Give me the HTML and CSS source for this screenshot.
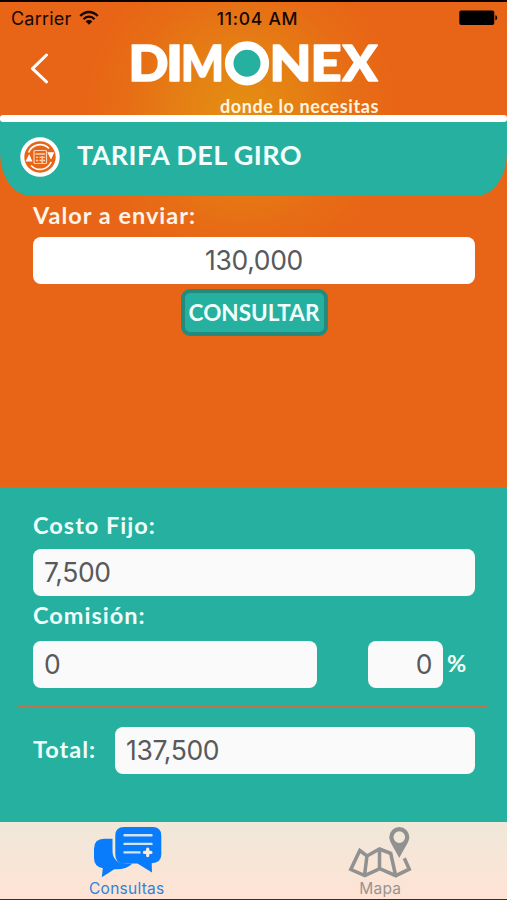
FILE: index.html
```html
<!DOCTYPE html>
<html lang="es">
<head>
<meta charset="utf-8">
<title>Dimonex</title>
<link rel="stylesheet" href="styles.css">
</head>
<body>
<div class="app">
  <div class="status">
    <span class="carrier">Carrier
      <svg width="20" height="16" viewBox="0 0 20 16" fill="none" stroke="#160600" stroke-width="2.3"><path d="M1.3 6.1C6 .6 14 .6 18.7 6.1M4.5 9.2c3-3.5 8-3.5 11 0"/><path d="M6.7 11.4c1.8-1.9 4.8-1.9 6.6 0L10 14.8z" fill="#160600" stroke="none"/></svg>
    </span>
    <span class="clock">11:04 AM</span>
    <svg class="battery" width="39" height="16" viewBox="0 0 39 16"><rect x=".3" y=".5" width="35" height="14.5" rx="2"/><path d="M36.4 5.3c2.4.5 2.4 4.5 0 5z"/></svg>
  </div>
  <header class="header">
    <svg class="back" width="20" height="32" viewBox="0 0 20 32" fill="none" stroke="#fff" stroke-width="3" stroke-linecap="round" stroke-linejoin="round"><path d="M17.500 2 3.500 15.600 17.500 28.800"/></svg>
    <div class="brand">
      <svg width="254" height="64" viewBox="127 30 254 64">
        <g class="wordmark">
          <text x="128.500" y="80.500" textLength="40" lengthAdjust="spacingAndGlyphs">D</text>
          <text x="166" y="80.500" textLength="17" lengthAdjust="spacingAndGlyphs">I</text>
          <text x="181" y="80.500" textLength="43" lengthAdjust="spacingAndGlyphs">M</text>
          <text x="229" y="80.500" textLength="37" lengthAdjust="spacingAndGlyphs">O</text>
          <text x="269.500" y="80.500" textLength="42" lengthAdjust="spacingAndGlyphs">N</text>
          <text x="310.500" y="80.500" textLength="31" lengthAdjust="spacingAndGlyphs">E</text>
          <text x="342.500" y="80.500" textLength="35" lengthAdjust="spacingAndGlyphs">X</text>
        </g>
        <circle cx="247" cy="63.300" r="17.800" fill="#26b09f" stroke="#fff" stroke-width="8.600"/>
      </svg>
      <div class="slogan">donde lo necesitas</div>
    </div>
  </header>
  <div class="rule"></div>
  <div class="title">
    <svg width="40" height="40" viewBox="0 0 40 40" fill="none" stroke="#fff">
      <circle cx="20" cy="20" r="17.700" fill="#e86417" stroke-width="4"/>
      <path d="M8.600 15.500A12.300 12.300 0 0 1 29 11.500M31.200 25A12.300 12.300 0 0 1 11 28.500" stroke-width="1.600"/>
      <path d="M5.500 24.500 9.200 17l3.200 7.500zM27.300 15.200h7L31 22.600z" fill="#fff" stroke="none"/>
      <rect x="14" y="13.500" width="12.500" height="13" rx="1" stroke="#fbd5b8" stroke-width="1.200"/>
      <path d="M15.500 17h9.500M16 20.300h2.200m1.300 0h2m1.500 0h2M16 23.500h2.200m1.300 0h2m1.500 0h2M22.200 19v7" stroke="#fbd5b8" stroke-width="1.300"/>
    </svg>
    <h1>TARIFA DEL GIRO</h1>
  </div>
  <section class="query">
    <label class="label send">Valor a enviar:</label>
    <div class="field center">130,000</div>
    <button class="consult">CONSULTAR</button>
  </section>
  <section class="result">
    <label class="label cost">Costo Fijo:</label>
    <div class="field">7,500</div>
    <label class="label fee">Comisión:</label>
    <div class="row">
      <div class="field amount">0</div>
      <div class="field percent">0</div>
      <span class="label sign">%</span>
    </div>
    <div class="divider"></div>
    <div class="row">
      <label class="label total">Total:</label>
      <div class="field sum">137,500</div>
    </div>
  </section>
  <nav class="tabs">
    <div class="tab active">
      <svg width="70" height="52" viewBox="93 826 70 52">
        <path d="M113.500 838.800h-8.500q-10 0-10 10v9q0 9 8.800 10.500l-1 9 12.500-8q12 .5 18.200-5.800h-6q-14 0-14-13z" fill="#087cfb"/>
        <path d="M125 827h28.500q8.800 0 8.800 8.500v19q0 8-9.600 8.700l.3 9.400-14.500-9H125q-8.700 0-8.700-9v-19q0-8.600 8.700-8.600z" fill="#087cfb"/>
        <path d="M125.500 835.200h27M125.500 843.900h27M125.500 852.400h15" stroke="#d3e4f2" stroke-width="2.400" stroke-linecap="round"/>
        <path d="M148.700 849.200v6.400M145.500 852.400h6.400" stroke="#fbeade" stroke-width="3.300" stroke-linecap="round"/>
      </svg>
      <span>Consultas</span>
    </div>
    <div class="tab">
      <svg width="66" height="52" viewBox="347 826 66 52" fill="none" stroke="#919191" stroke-width="3.500">
        <path d="M391 853.500 379.500 849l-12.500 7-7.200-5.500-9 19 14 6.200 15-7 16 7 13.500-6.500-5-11M367 855.500l-2.500 20M379.500 849v20M390.500 852.500 395.500 875"/>
        <path d="M399.300 827a10 10 0 0 1 10 10c0 4.500-3 8-10 21-7-13-10-16.500-10-21a10 10 0 0 1 10-10zm0 4.300a5.800 5.800 0 1 0 0 11.600 5.800 5.800 0 0 0 0-11.600z" fill="#919191" fill-rule="evenodd" stroke="none"/>
      </svg>
      <span>Mapa</span>
    </div>
  </nav>
</div>
</body>
</html>
```
FILE: styles.css
```css
* { box-sizing: border-box; }
body { margin: 0; font-family: Lato, "Liberation Sans", sans-serif; }
.app {
  width: 507px; height: 900px;
  display: flex; flex-direction: column;
  border-top: 2px solid #080200;
  border-bottom: 1px solid #4c2718;
  background: radial-gradient(circle at 241px 109px, #e48f12 0, #e57e14 65px, #e76d15 115px, #e86416 160px);
  overflow: hidden;
}
.status {
  height: 32px; padding: 0 9px 0 11px;
  display: grid; grid-template-columns: 1fr auto 1fr; align-items: center;
  font-family: Inter, sans-serif; font-size: 18px; color: #160600;
}
.carrier { display: flex; align-items: center; gap: 8px; letter-spacing: .2px; }
.clock { font-weight: 500; font-size: 17.5px; letter-spacing: .75px; padding-left: 6px; }
.battery { justify-self: end; fill: #000; }
.header { height: 81px; display: flex; align-items: flex-start; padding-left: 29px; }
.back { margin-top: 19px; }
.brand { width: 254px; margin: -4px 0 0 78px; }
.brand svg { display: block; }
.wordmark { font: 900 49px Lato, sans-serif; fill: #fff; stroke: #fff; stroke-width: 1.6; stroke-linejoin: round; }
.slogan { margin-top: -1px; padding-right: 2px; font-size: 18px; line-height: 26px; font-weight: 700; letter-spacing: .6px; color: #fff4df; text-align: right; white-space: nowrap; }
.rule { height: 7px; border-radius: 3px; background: #fff; box-shadow: 0 3px #26b09f; z-index: 1; }
.title {
  height: 74px; padding: 0 21px 4px 20px; display: flex; align-items: center; gap: 17px;
  border-radius: 0 0 31px 31px / 0 0 43px 43px; background: #26b09f; color: #f3fffc;
}
h1 { margin: 0 0 4px; font-size: 27px; line-height: 32px; font-weight: 700; letter-spacing: .4px; white-space: nowrap; }
.label { display: block; color: #effffb; font-size: 23.5px; line-height: 28px; font-weight: 700; letter-spacing: 1px; white-space: nowrap; }
.field {
  height: 47px; border-radius: 8px; background: #fafafa; color: #58595b;
  padding: 0 11px; font: 26.5px/46px Inter, sans-serif; letter-spacing: -.35px;
}
.query { height: 291px; padding: 5px 32px 0 33px; display: flex; flex-direction: column; }
.send { color: #fff4e8; margin-bottom: 8px; }
.center { background: #fff; text-align: center; }
.consult {
  width: 147px; height: 47px; margin: 5px 0 0; align-self: center; padding: 0;
  border: 4px solid #238b7e; border-radius: 9px; background: #26b09f; color: #f1fffc;
  font: 700 22.5px/37px Lato, sans-serif; white-space: nowrap;
}
.result { height: 335px; padding: 24px 32px 0 33px; background: #26b09f; }
.cost { margin-bottom: 10px; }
.fee { margin: 5px 0 12px; }
.row { display: flex; align-items: center; }
.amount { width: 284px; }
.percent { width: 75px; margin-left: 51px; text-align: right; }
.sign { margin: 0 0 3px 4px; }
.divider { height: 3px; margin: 17px -13px 19px -15px; background: #bd764b; }
.total { width: 82px; margin-bottom: 3px; }
.sum { flex: 1; }
.tabs {
  flex: 1; display: grid; grid-template-columns: 1fr 1fr; padding-top: 4px;
  background: linear-gradient(#efe8da, #ffe3d4);
}
.tab { display: flex; flex-direction: column; align-items: center; font: 15.5px/20px Inter, sans-serif; color: #999390; letter-spacing: .25px; }
.tab span { margin-top: 1px; }
.active { color: #337fdd; }
```
